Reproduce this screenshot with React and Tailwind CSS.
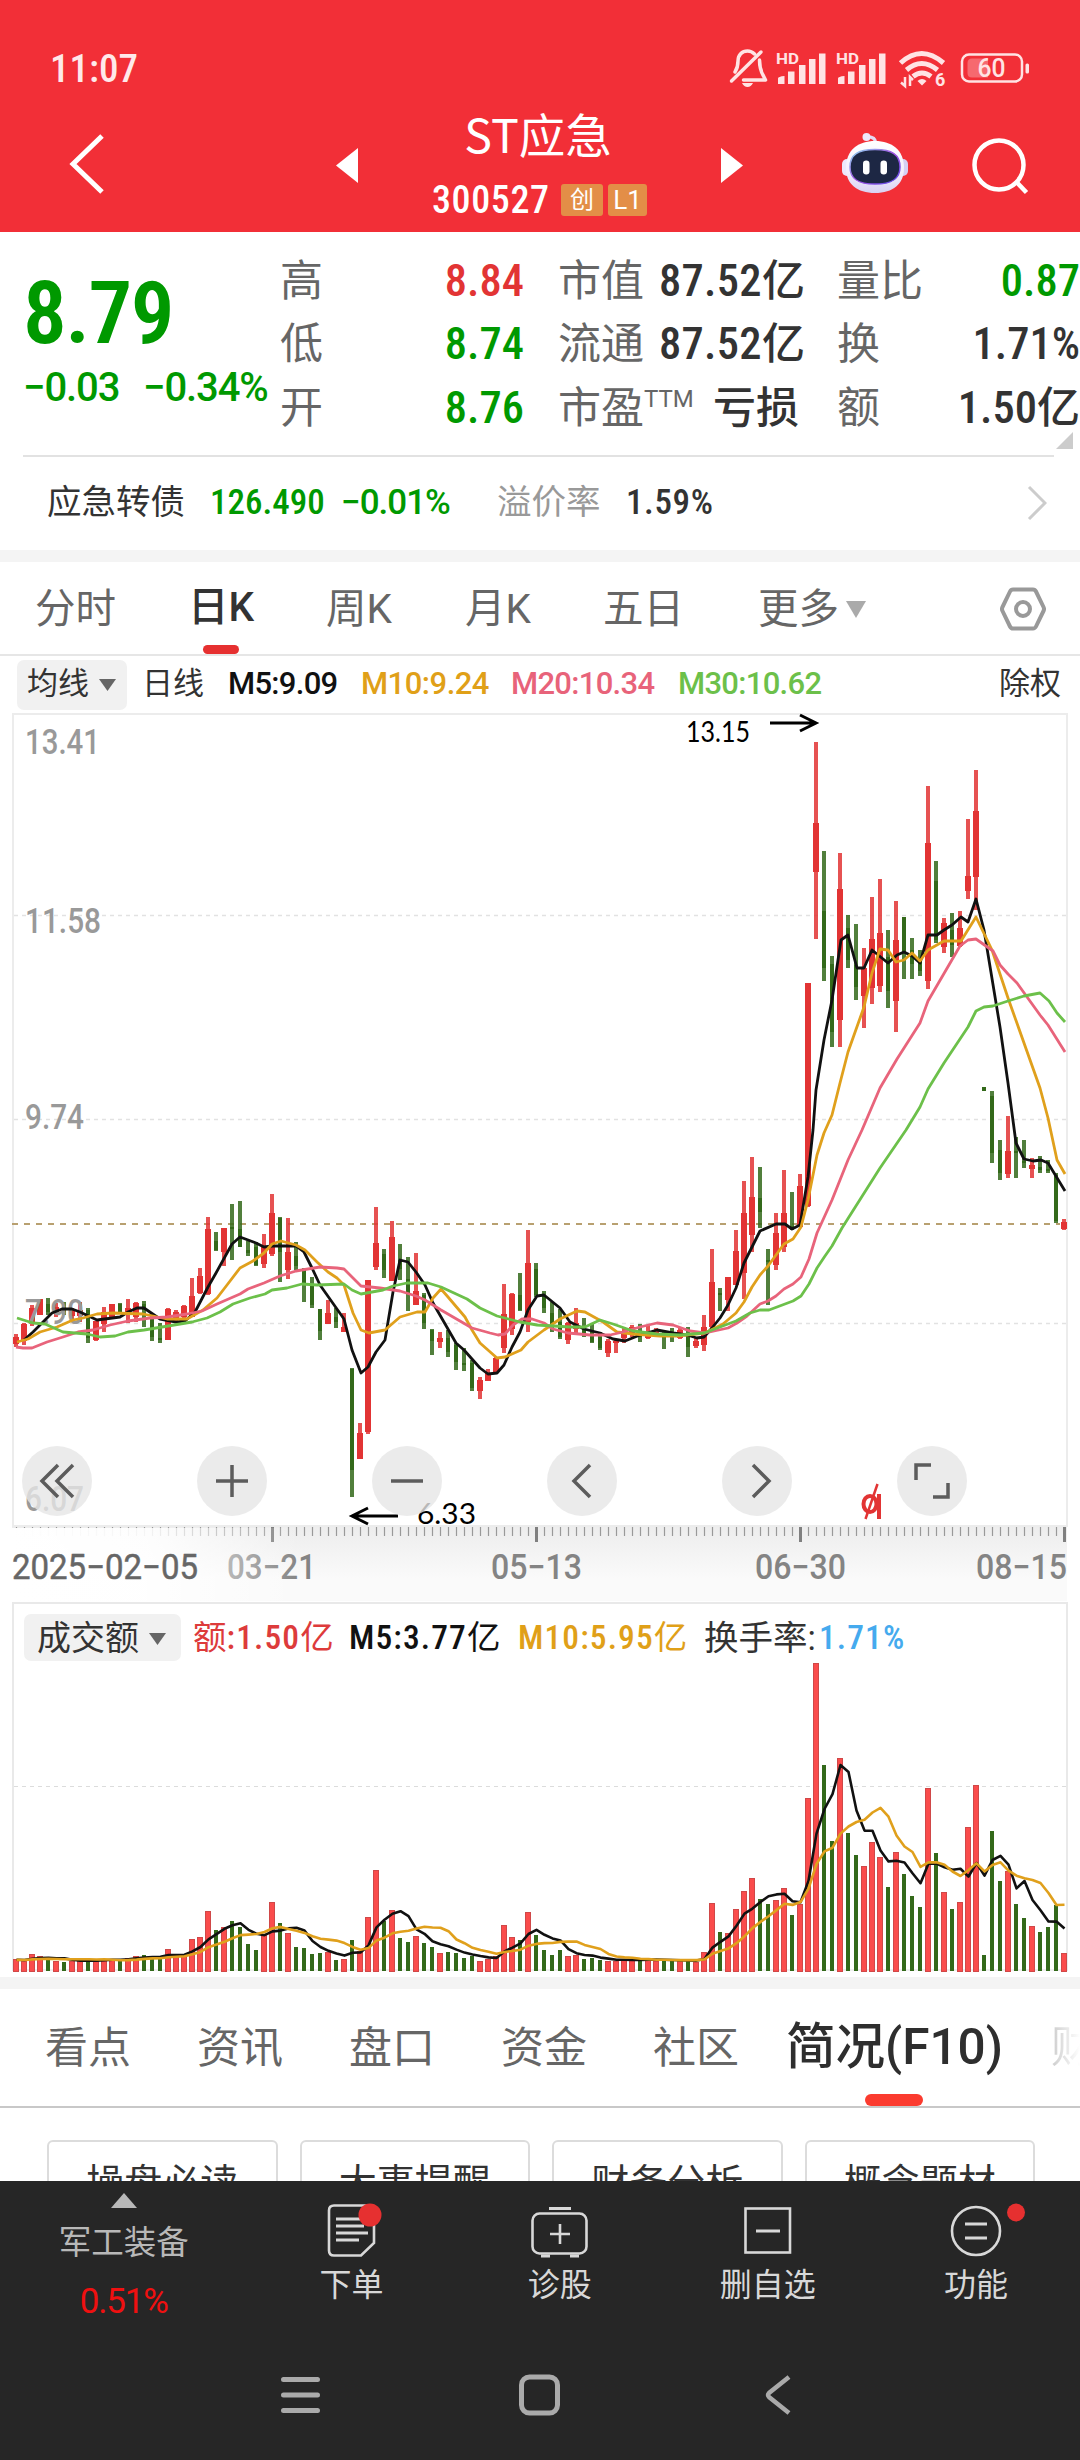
const RED = "#e23434";
const GREEN = "#33691a";

// [up, high, bodyTop, bodyBottom, low, turnover] in chart units, one row per trading day
const DAYS = [
  [1, 1334, 1337, 1344, 1347, 12], [1, 1323, 1324, 1341, 1345, 10], [1, 1305, 1308, 1324, 1326, 17],
  [1, 1299, 1299, 1315, 1315, 15], [0, 1298, 1304, 1312, 1315, 12], [1, 1303, 1307, 1313, 1317, 10],
  [0, 1302, 1307, 1312, 1315, 9], [1, 1308, 1310, 1316, 1319, 10], [1, 1302, 1310, 1316, 1322, 11],
  [0, 1308, 1310, 1338, 1343, 11], [1, 1321, 1321, 1340, 1341, 10], [1, 1307, 1312, 1324, 1332, 12],
  [1, 1304, 1304, 1319, 1319, 12], [0, 1303, 1304, 1312, 1313, 11], [1, 1299, 1308, 1313, 1323, 13],
  [1, 1302, 1303, 1317, 1322, 15], [0, 1301, 1304, 1310, 1327, 16], [0, 1313, 1317, 1337, 1341, 15],
  [0, 1323, 1338, 1339, 1343, 12], [1, 1308, 1309, 1340, 1340, 22], [1, 1310, 1312, 1320, 1322, 15],
  [1, 1305, 1306, 1317, 1322, 17], [1, 1278, 1296, 1317, 1317, 32], [1, 1268, 1276, 1293, 1294, 34],
  [1, 1217, 1229, 1294, 1295, 60], [0, 1232, 1241, 1250, 1251, 41], [1, 1228, 1228, 1252, 1266, 44],
  [0, 1204, 1227, 1229, 1260, 50], [0, 1201, 1229, 1247, 1247, 44], [0, 1241, 1250, 1253, 1256, 27],
  [0, 1242, 1247, 1265, 1266, 21], [1, 1234, 1247, 1264, 1268, 37], [1, 1194, 1213, 1254, 1256, 69],
  [0, 1217, 1218, 1252, 1282, 48], [1, 1218, 1252, 1270, 1279, 38], [0, 1242, 1256, 1266, 1270, 24],
  [0, 1268, 1269, 1283, 1302, 23], [0, 1277, 1284, 1305, 1308, 17], [0, 1309, 1309, 1331, 1340, 18],
  [1, 1300, 1313, 1324, 1324, 19], [0, 1308, 1317, 1322, 1328, 11], [1, 1313, 1327, 1332, 1332, 12],
  [0, 1368, 1369, 1470, 1497, 31], [1, 1423, 1433, 1459, 1459, 20], [1, 1280, 1280, 1432, 1434, 54],
  [1, 1207, 1243, 1267, 1270, 101], [0, 1249, 1254, 1270, 1278, 50], [1, 1221, 1237, 1281, 1281, 61],
  [0, 1244, 1260, 1269, 1280, 33], [0, 1257, 1279, 1293, 1311, 29], [1, 1253, 1291, 1305, 1305, 35],
  [0, 1293, 1295, 1323, 1329, 28], [0, 1329, 1330, 1341, 1355, 24], [1, 1332, 1338, 1342, 1348, 18],
  [0, 1330, 1338, 1352, 1357, 19], [0, 1343, 1345, 1362, 1370, 18], [0, 1348, 1363, 1365, 1371, 13],
  [0, 1360, 1363, 1388, 1391, 15], [1, 1377, 1380, 1391, 1399, 10], [1, 1369, 1373, 1381, 1381, 12],
  [1, 1357, 1358, 1372, 1374, 15], [1, 1284, 1314, 1348, 1353, 46], [1, 1293, 1294, 1329, 1335, 34],
  [0, 1273, 1295, 1310, 1311, 31], [1, 1230, 1263, 1322, 1332, 59], [0, 1263, 1269, 1295, 1297, 36],
  [0, 1291, 1295, 1308, 1313, 21], [0, 1302, 1313, 1327, 1332, 16], [0, 1309, 1322, 1337, 1339, 21],
  [1, 1322, 1323, 1340, 1344, 15], [1, 1308, 1323, 1329, 1333, 16], [0, 1318, 1327, 1333, 1337, 12],
  [0, 1323, 1332, 1342, 1343, 13], [0, 1332, 1337, 1348, 1350, 11], [1, 1339, 1341, 1353, 1357, 10],
  [1, 1340, 1341, 1343, 1353, 10], [1, 1327, 1332, 1338, 1343, 12], [1, 1325, 1327, 1333, 1337, 12],
  [0, 1324, 1332, 1337, 1342, 11], [1, 1326, 1332, 1338, 1339, 12], [1, 1328, 1331, 1336, 1337, 10],
  [0, 1332, 1333, 1338, 1349, 11], [0, 1328, 1332, 1335, 1342, 11], [1, 1328, 1330, 1338, 1339, 10],
  [0, 1327, 1337, 1347, 1357, 11], [1, 1338, 1341, 1346, 1348, 9], [1, 1315, 1327, 1345, 1351, 19],
  [1, 1249, 1282, 1327, 1329, 68], [0, 1288, 1293, 1295, 1311, 39], [1, 1277, 1277, 1300, 1311, 38],
  [1, 1230, 1251, 1285, 1285, 62], [1, 1181, 1213, 1273, 1299, 80], [1, 1157, 1197, 1235, 1252, 93],
  [0, 1167, 1198, 1212, 1228, 72], [0, 1249, 1260, 1262, 1305, 67], [1, 1213, 1233, 1265, 1270, 71],
  [1, 1170, 1213, 1247, 1252, 83], [0, 1192, 1226, 1229, 1230, 56], [1, 1174, 1186, 1227, 1227, 67],
  [1, 983, 983, 1206, 1207, 173], [1, 742, 823, 872, 939, 308], [0, 851, 911, 968, 981, 206],
  [0, 956, 964, 1032, 1047, 130], [1, 853, 889, 1020, 1047, 213], [0, 915, 928, 960, 968, 138],
  [0, 924, 965, 987, 1000, 116], [1, 948, 968, 996, 1028, 105], [1, 897, 939, 988, 1004, 129],
  [1, 879, 933, 986, 992, 114], [0, 930, 957, 991, 1008, 84], [1, 901, 940, 1001, 1032, 119],
  [0, 917, 917, 953, 979, 97], [0, 938, 950, 964, 979, 75], [0, 950, 958, 971, 976, 64],
  [1, 786, 843, 981, 989, 183], [0, 861, 881, 940, 943, 118], [1, 918, 923, 947, 953, 79],
  [0, 913, 930, 945, 957, 62], [1, 911, 928, 946, 947, 69], [1, 819, 876, 891, 899, 144],
  [1, 770, 811, 877, 910, 186], [0, 1087, 1087, 1091, 1091, 16], [0, 1091, 1096, 1153, 1163, 140],
  [0, 1140, 1150, 1173, 1180, 90], [1, 1116, 1151, 1174, 1178, 100], [0, 1137, 1151, 1153, 1178, 67],
  [0, 1140, 1161, 1163, 1168, 53], [1, 1158, 1165, 1169, 1178, 45], [0, 1156, 1167, 1170, 1173, 39],
  [0, 1160, 1169, 1171, 1173, 44], [0, 1173, 1175, 1221, 1223, 66], [1, 1219, 1222, 1229, 1230, 18],
];

const MA5 =
  "24,1340 33,1332 43,1322 52,1313 62,1309 72,1309 80,1312 97,1320 120,1317 128,1312 137,1308 144,1308 160,1319 176,1322 185,1321 195,1312 208,1287 216,1273 232,1244 240,1237 256,1243 264,1247 272,1246 296,1246 304,1252 312,1268 320,1285 344,1319 352,1350 361,1373 368,1367 376,1352 385,1340 393,1292 400,1260 408,1262 416,1272 425,1285 433,1303 456,1343 464,1350 480,1368 488,1374 497,1373 504,1365 512,1347 520,1332 528,1310 537,1296 544,1295 560,1308 570,1322 584,1329 600,1333 613,1339 625,1341 640,1335 657,1330 673,1333 687,1335 697,1338 704,1337 712,1328 720,1318 728,1305 736,1288 744,1263 760,1231 776,1224 785,1224 792,1229 800,1225 808,1177 813,1130 816,1090 824,1040 832,1000 841,940 848,935 857,968 864,968 872,950 888,963 897,955 904,952 912,956 920,963 928,935 937,935 944,930 952,925 961,917 968,922 976,899 984,930 1000,1027 1008,1083 1016,1143 1024,1159 1033,1161 1041,1160 1048,1163 1065,1191";
const MA10 =
  "17,1342 28,1339 40,1332 57,1327 73,1320 83,1318 97,1314 113,1313 143,1314 153,1316 167,1319 187,1319 203,1310 217,1298 227,1285 240,1268 253,1261 264,1253 272,1244 281,1241 296,1245 305,1250 317,1262 328,1272 337,1278 344,1285 353,1313 361,1330 369,1333 385,1330 400,1317 417,1312 425,1312 433,1298 441,1289 448,1297 465,1317 472,1330 480,1343 497,1358 505,1357 521,1350 528,1342 544,1330 560,1319 577,1311 585,1312 603,1322 617,1332 633,1334 660,1336 677,1336 705,1333 723,1324 736,1313 744,1302 752,1287 760,1275 768,1266 784,1244 793,1239 801,1227 808,1200 817,1155 824,1133 832,1115 840,1083 848,1052 864,1007 872,973 880,949 888,950 896,962 904,960 912,953 920,961 928,950 944,941 961,941 976,917 992,950 1008,998 1040,1088 1048,1118 1057,1160 1065,1174";
const MA20 =
  "16,1347 23,1348 32,1348 47,1342 63,1337 78,1332 93,1330 110,1325 128,1321 150,1318 167,1317 187,1314 202,1311 217,1304 240,1294 248,1289 264,1283 280,1276 296,1271 320,1267 337,1268 344,1269 361,1286 380,1288 400,1291 416,1296 425,1300 441,1310 472,1328 490,1333 498,1335 505,1334 513,1325 522,1319 532,1319 544,1323 553,1329 568,1333 590,1335 610,1335 623,1332 640,1327 657,1323 673,1325 690,1331 705,1333 728,1328 737,1323 747,1316 760,1304 768,1301 776,1296 784,1289 793,1284 801,1277 809,1259 817,1233 832,1200 848,1160 862,1130 880,1088 897,1059 920,1023 928,1001 960,946 968,940 976,939 993,951 1000,965 1008,974 1017,983 1040,1015 1048,1025 1065,1052";
const MA30 =
  "17,1318 33,1323 45,1324 63,1332 87,1334 100,1337 115,1336 128,1332 144,1330 168,1326 192,1322 207,1318 220,1312 233,1304 250,1298 265,1294 272,1290 287,1288 302,1284 317,1285 344,1284 352,1290 361,1294 383,1290 393,1286 407,1283 428,1283 441,1287 467,1299 480,1308 497,1316 520,1322 537,1325 570,1327 585,1327 600,1320 613,1324 633,1331 657,1334 680,1335 704,1333 736,1321 750,1313 760,1310 769,1310 793,1301 801,1296 809,1284 817,1268 825,1256 832,1246 842,1228 880,1168 906,1130 920,1107 928,1089 944,1063 968,1027 976,1011 984,1007 993,1006 1008,1001 1024,996 1040,993 1049,1001 1057,1013 1065,1022";

const dayX = (i) => 16 + i * 8;

function volumeAverage(n) {
  return DAYS.map((_, i) => {
    let sum = 0;
    for (let k = i - n + 1; k <= i; k++) sum += k < 0 ? 11 : DAYS[k][5];
    return `${dayX(i) + 0.5},${(1971 - sum / n).toFixed(1)}`;
  }).join(" ");
}

function Caret({ className }) {
  return (
    <svg className={className} viewBox="0 0 18 12" fill="currentColor" preserveAspectRatio="none">
      <path d="M0 0h18L9 12z" />
    </svg>
  );
}

function Signal({ x }) {
  return (
    <g transform={`translate(${x} 0)`} fill="#ffe3e4">
      <text x="-2" y="16" fontSize="15.5" fontWeight="700" textLength="23" lengthAdjust="spacingAndGlyphs">
        HD
      </text>
      <path d="M0 36v-5.500q0-2 6.500-2.500v8zM10 23.500h6.500V36H10zM21 17h6.500v19H21zM31 11h6.500v25H31zM41 5.500h6.500V36H41z" />
    </g>
  );
}

function StatusBar() {
  return (
    <div className="flex h-[88px] items-end justify-between pl-[50px]">
      <span className="mb-[-4px] text-[39px] leading-[46px] font-medium text-[#ffe9ea] [font-stretch:75%]">11:07</span>
      <svg className="h-[44px] w-[350px] overflow-visible" viewBox="0 -4 350 44">
        <g fill="none" stroke="#ffe3e4" strokeWidth="3.500" strokeLinecap="round" strokeLinejoin="round">
          <path d="M6 24c2-3 3-6 3-11C9 7 13 3 18.500 3c3 0 5 1 7 3M30.500 12c0 8 1 11 4 16l2 4H14.500" transform="translate(-1 0)" />
          <path d="M1.500 33L31 4" />
        </g>
        <path d="M12 35h11q-2 4-5.500 4T12 35z" fill="#ffe3e4" />
        <Signal x={48} />
        <Signal x={108} />
        <g fill="none" stroke="#ffe3e4" strokeWidth="5">
          <path d="M170.500 15q21-19 43 0M176.500 22q15-13 31 0M183 28.500q9-7 18 0" />
        </g>
        <path d="M187.500 33q4.500-4 9 0l-4.500 4.500z" fill="#ffe3e4" />
        <path d="M175 29v9l-4-3.500M180 38v-9l3 3" fill="none" stroke="#ffe3e4" strokeWidth="2.500" />
        <text x="205" y="38" fontSize="18" fontWeight="700" fill="#ffe3e4">6</text>
        <rect x="232" y="6.500" width="60" height="27" rx="7" fill="none" stroke="#ffe3e4" strokeWidth="2.500" />
        <path d="M242 10.500h16v19h-16q-4.500 0-4.500-4.500V15q0-4.500 4.500-4.500z" fill="#f6696f" />
        <text x="247.500" y="29" fontSize="25" fontWeight="500" fill="#ffe3e4" textLength="28" lengthAdjust="spacingAndGlyphs">
          60
        </text>
        <rect x="295.500" y="15.500" width="3.500" height="10" rx="1.500" fill="#ffe3e4" />
      </svg>
    </div>
  );
}

function Robot() {
  return (
    <svg className="h-[62px] w-[68px]" viewBox="0 0 68 62">
      <defs>
        <linearGradient id="shell" x1="0" y1="0" x2="0" y2="1">
          <stop offset="0" stopColor="#ffffff" />
          <stop offset="0.600" stopColor="#f3eefc" />
          <stop offset="1" stopColor="#d9d2f2" />
        </linearGradient>
        <linearGradient id="rim" x1="0" y1="0" x2="1" y2="1">
          <stop offset="0" stopColor="#8fdcf0" />
          <stop offset="0.500" stopColor="#a04fe0" />
          <stop offset="1" stopColor="#5b4be8" />
        </linearGradient>
      </defs>
      <path d="M25 5q9-1 10 6" fill="none" stroke="#e4d9f3" strokeWidth="3" />
      <circle cx="25.500" cy="5" r="4" fill="#eee8fb" />
      <rect x="1" y="27" width="10" height="17" rx="5" fill="#ece8fb" />
      <rect x="57" y="27" width="10" height="17" rx="5" fill="#d6d0f4" />
      <path d="M34 9c17 0 29 9 29 27 0 16-11 25-29 25S5 52 5 36C5 18 17 9 34 9z" fill="url(#shell)" />
      <path d="M34 17.500c17 0 25 5 25 17.500 0 12-8 17-25 17S9 47 9 35c0-12.500 8-17.500 25-17.500z" fill="#1d2744" stroke="url(#rim)" strokeWidth="1.500" />
      <rect x="22" y="28.500" width="6.500" height="14" rx="3.200" fill="#fff" />
      <rect x="39.500" y="28.500" width="6.500" height="14" rx="3.200" fill="#fff" />
    </svg>
  );
}

function Header() {
  return (
    <header className="h-[232px] bg-[#f22f37] text-white">
      <StatusBar />
      <div className="flex h-[144px]">
        <svg className="mt-[44px] ml-[66px] h-[64px] w-[42px]" viewBox="0 0 42 64">
          <path d="M36 4L7 32l29 28" fill="none" stroke="#fff" strokeWidth="5" />
        </svg>
        <svg className="mt-[60px] ml-[228px] h-[35px] w-[22px]" viewBox="0 0 22 35" fill="#fff">
          <path d="M22 0v35L0 17.500z" />
        </svg>
        <div className="flex w-[363px] flex-col items-center">
          <h1 className="mt-[17px] mr-[3px] text-[46.500px] leading-[56px] font-normal font-['Noto_Sans_CJK_SC',sans-serif]">ST应急</h1>
          <div className="mt-[20px] flex h-[38px] items-center">
            <span className="w-[129px] text-[38px] leading-[38px] font-medium tracking-[0.6px] [font-stretch:75%]">300527</span>
            <span className="mr-[5px] flex h-[32px] w-[42px] items-center justify-center rounded-[3px] bg-[#e38e47] text-[24px] leading-none">
              创
            </span>
            <span className="flex h-[32px] w-[39px] items-center justify-center rounded-[3px] bg-[#e38e47] text-[26px] leading-none">
              L1
            </span>
          </div>
        </div>
        <svg className="mt-[60px] h-[35px] w-[22px]" viewBox="0 0 22 35" fill="#fff">
          <path d="M0 0v35l22-17.500z" />
        </svg>
        <div className="mt-[44px] ml-[98px]">
          <Robot />
        </div>
        <svg className="mt-[48px] ml-[60px] h-[60px] w-[60px]" viewBox="0 0 60 60" fill="none" stroke="#fff" strokeWidth="4.500">
          <circle cx="30" cy="29" r="24.500" />
          <path d="M47.500 46l10 10.500" />
        </svg>
      </div>
    </header>
  );
}

const STATS = [
  { label: "高", value: "8.84", color: "text-[#e23434]", cap: "市值", capValue: "87.52", unit: "亿", r: "量比", rValue: "0.87", rUnit: "", rColor: "text-[#009900]" },
  { label: "低", value: "8.74", color: "text-[#009900]", cap: "流通", capValue: "87.52", unit: "亿", r: "换", rValue: "1.71%", rUnit: "", rColor: "text-[#333]" },
  { label: "开", value: "8.76", color: "text-[#009900]", cap: "市盈", ttm: true, capValue: "", unit: "亏损", r: "额", rValue: "1.50", rUnit: "亿", rColor: "text-[#333]" },
];

function Quote() {
  return (
    <section className="h-[318px]">
      <div className="flex h-[223px]">
        <div className="w-[281px] pl-[23px] text-[#009900]">
          <div className="mt-[31px] text-[87px] leading-[100px] font-semibold tracking-[-1.5px] [font-stretch:75%]">8.79</div>
          <div className="mt-[1px] flex text-[40px] leading-[48px] font-medium tracking-[-1.1px] whitespace-nowrap">
            <span className="w-[120px]">−0.03</span>
            <span>−0.34%</span>
          </div>
        </div>
        <div className="flex flex-1 flex-col pt-[17px]">
          {STATS.map((s) => (
            <div key={s.label} className="flex h-[63.500px] items-center text-[43px] leading-[60px] whitespace-nowrap text-[#666]">
              <span className="-ml-px w-[121px]">{s.label}</span>
              <span className={`w-[123px] text-right text-[44.500px] font-medium [font-stretch:75%] ${s.color}`}>{s.value}</span>
              <span className="ml-[34px] w-[131px]">
                {s.cap}
                {s.ttm && <sup className="top-[-16px] align-baseline text-[24px] leading-none">TTM</sup>}
              </span>
              <span className="-ml-[30px] w-[140px] text-right font-medium text-[#333]">
                <span className="text-[44.500px] tracking-[0.3px] [font-stretch:75%]">{s.capValue}</span>
                {s.unit}
              </span>
              <span className="ml-[38px] w-[84px]">{s.r}</span>
              <span className={`flex-1 text-right font-medium ${s.rColor}`}>
                <span className="text-[44.500px] [font-stretch:75%]">{s.rValue}</span>
                {s.rUnit}
              </span>
            </div>
          ))}
          <svg className="mt-[-8px] mr-[7px] h-[17px] w-[17px] shrink-0 self-end" viewBox="0 0 17 17">
            <path d="M17 0v17H0z" fill="#ccc" />
          </svg>
        </div>
      </div>
      <div className="mr-[26px] ml-[23px] h-[2px] bg-[#e2e2e2]" />
      <div className="flex h-[92px] items-center pl-[47px] text-[34.500px] font-medium whitespace-nowrap">
        <span className="w-[163px] font-normal text-[#333]">应急转债</span>
        <span className="w-[131px] text-[35px] text-[#009900] [font-stretch:75%]">126.490</span>
        <span className="w-[156px] text-[35px] tracking-[-1px] text-[#009900]">−0.01%</span>
        <span className="w-[129px] font-normal text-[#999]">溢价率</span>
        <span className="w-[401px] text-[35px] tracking-[0.6px] text-[#333] [font-stretch:75%]">1.59%</span>
        <svg className="h-[36px] w-[20px]" viewBox="0 0 20 36">
          <path d="M2 2l16 16L2 34" fill="none" stroke="#ccc" strokeWidth="3" />
        </svg>
      </div>
    </section>
  );
}

function PeriodTabs() {
  return (
    <nav className="flex h-[94px] items-center border-b-2 border-[#e6e6e6] pl-[35px] text-[40.500px] whitespace-nowrap text-[#666]">
      <span className="mt-[3px] w-[153px]">分时</span>
      <span className="flex h-[92px] w-[138px] flex-col text-[#333]">
        <span className="h-[83px] leading-[91px] font-medium">日K</span>
        <span className="ml-[15px] h-[9px] w-[36px] shrink-0 rounded-[5px] bg-[#e63030]" />
      </span>
      <span className="mt-[3px] w-[139px]">周K</span>
      <span className="mt-[3px] w-[138px]">月K</span>
      <span className="mt-[3px] w-[155px]">五日</span>
      <span className="mt-[3px]">更多</span>
      <Caret className="mt-[2px] ml-[7px] h-[17px] w-[20px] text-[#aaa]" />
      <svg className="mt-[2px] ml-[134px] h-[44px] w-[46px]" viewBox="0 0 46 44" fill="none" stroke="#999" strokeWidth="4">
        <path d="M13 2.500h20q2 0 3 2L43.500 20q1 2 0 4L36 39.500q-1 2-3 2H13q-2 0-3-2L2.500 24q-1-2 0-4L10 4.500q1-2 3-2z" />
        <circle cx="23" cy="22" r="7" />
      </svg>
    </nav>
  );
}

function Legend() {
  return (
    <div className="flex h-[57px] items-center pl-[17px] text-[31px] whitespace-nowrap text-[#333]">
      <span className="flex h-[50px] w-[110px] items-center rounded-[7px] bg-[#f1f1f1] pl-[10px]">
        均线
        <Caret className="ml-[10px] h-[12px] w-[17px] text-[#666]" />
      </span>
      <span className="ml-[15px] w-[86px]">日线</span>
      <span className="w-[133px] font-medium tracking-[-0.7px] text-[#111]">M5:9.09</span>
      <span className="w-[150px] font-medium tracking-[-0.5px] text-[#e0a018]">M10:9.24</span>
      <span className="w-[167px] font-medium tracking-[-0.7px] text-[#e8637a]">M20:10.34</span>
      <span className="w-[321px] font-medium tracking-[-0.7px] text-[#6cc04a]">M30:10.62</span>
      <span>除权</span>
    </div>
  );
}

const PRICE_LABELS = [
  ["13.41", 754, 75],
  ["11.58", 933, 76],
  ["9.74", 1129, 59],
  ["7.90", 1324, 59],
  ["6.07", 1511, 59],
];

const DATES = [
  ["03−21", 227, 89],
  ["05−13", 491, 91],
  ["06−30", 755, 91],
  ["08−15", 976, 91],
];

function Candle({ day, x }) {
  const [up, high, top, bottom, low] = day;
  return (
    <g fill={up ? RED : GREEN}>
      <rect x={x - 2} y={high} width="4" height={low - high} opacity="0.850" />
      <rect x={x - (up ? 3 : 2)} y={top} width={up ? 6 : 4} height={Math.max(bottom - top, 2)} />
    </g>
  );
}

function PriceChart() {
  return (
    <svg className="block h-[888px] w-[1080px]" viewBox="0 713 1080 888">
      <defs>
        <linearGradient id="axis" x1="0" y1="0" x2="0" y2="1">
          <stop offset="0" stopColor="#ededed" />
          <stop offset="0.700" stopColor="#fafafa" />
        </linearGradient>
        <linearGradient id="fade" x1="0" y1="0" x2="1" y2="0">
          <stop offset="0" stopColor="#fff" />
          <stop offset="0.150" stopColor="#fff" stopOpacity="0.900" />
          <stop offset="0.320" stopColor="#fff" stopOpacity="0" />
        </linearGradient>
      </defs>
      <rect x="13" y="714" width="1054" height="812" fill="none" stroke="#ececec" strokeWidth="2" />
      <g stroke="#e2e2e2" strokeWidth="1.500" strokeDasharray="4 4">
        <path d="M14 915.500H1066M14 1119.500H1066M14 1323.500H1066" />
      </g>
      <path d="M12 1224H1060" stroke="#b8a070" strokeWidth="2" strokeDasharray="6 6" />
      {DAYS.map((day, i) => (
        <Candle key={i} day={day} x={dayX(i)} />
      ))}
      <g fontSize="34.500" fontWeight="500" fill="#999">
        {PRICE_LABELS.map(([t, y, w]) => (
          <text key={t} x="25" y={y} textLength={w} lengthAdjust="spacingAndGlyphs">
            {t}
          </text>
        ))}
      </g>
      <g fill="none" strokeWidth="2.800" strokeLinejoin="round">
        <polyline points={MA5} stroke="#111" />
        <polyline points={MA10} stroke="#e0a01c" />
        <polyline points={MA20} stroke="#e8647b" />
        <polyline points={MA30} stroke="#6cc04a" />
      </g>
      <g fill="none" stroke="#000" strokeWidth="3">
        <path d="M770 723H815M800 715l16 8-16 8M398 1516H353M368 1508l-16 8 16 8" />
      </g>
      <g fontSize="29.500" fill="#000" fontFamily="Lato, sans-serif">
        <text x="686" y="742" textLength="64" lengthAdjust="spacingAndGlyphs">13.15</text>
        <text x="417" y="1524" textLength="59" lengthAdjust="spacingAndGlyphs">6.33</text>
      </g>
      <g fill="none" stroke={RED}>
        <ellipse cx="870" cy="1504" rx="6.500" ry="8" strokeWidth="4" />
        <path d="M879 1494v25" strokeWidth="4" />
        <path d="M865.500 1519L877.500 1484" strokeWidth="2.500" />
      </g>
      <rect x="12" y="1527" width="1055" height="74" fill="url(#axis)" />
      {DAYS.map((_, i) => (
        <path
          key={i}
          d={i % 33 === 32 ? `M${dayX(i) + 0.5} 1527v15` : `M${dayX(i) + 0.5} 1527v9`}
          stroke={i % 33 === 32 ? "#808080" : "#999"}
          strokeWidth={i % 33 === 32 ? 3 : 1.2}
        />
      ))}
      <g fontSize="35" fontWeight="500" fill="#848484">
        {DATES.map(([t, x, w]) => (
          <text key={t} x={x} y="1579" textLength={w} lengthAdjust="spacingAndGlyphs">
            {t}
          </text>
        ))}
      </g>
      <rect x="12" y="1528" width="900" height="73" fill="url(#fade)" />
      <text x="12" y="1579" fontSize="35" stroke="#666" strokeWidth="0.500" fill="#666" textLength="186" lengthAdjust="spacingAndGlyphs">
        2025−02−05
      </text>
    </svg>
  );
}

const CONTROLS = [
  "M18 1L2 17l16 16M33 1L17 17l16 16",
  "M17 1v32M1 17h32",
  "M1 17h32",
  "M25 1L9 17l16 16",
  "M13 1l16 16-16 16",
];

function ChartControls() {
  return (
    <div className="absolute top-[733px] left-[22px] flex gap-[105px]">
      {CONTROLS.map((d) => (
        <button key={d} className="flex h-[70px] w-[70px] items-center justify-center rounded-full bg-[#e6e6e6]/80">
          <svg className="h-[34px] w-[34px] overflow-visible" viewBox="0 0 34 34" fill="none" stroke="#5c5c5c" strokeWidth="3.500">
            <path d={d} />
          </svg>
        </button>
      ))}
      <button className="flex h-[70px] w-[70px] items-center justify-center rounded-full bg-[#e6e6e6]/80">
        <svg className="h-[36px] w-[36px]" viewBox="0 0 36 36" fill="none" stroke="#5c5c5c" strokeWidth="3.500">
          <path d="M2 17V2h15M34 20v14H19" />
        </svg>
      </button>
    </div>
  );
}

function VolumeLegend() {
  return (
    <div className="absolute top-[13px] left-[24px] flex h-[47px] items-center text-[33.500px] whitespace-nowrap text-[#333]">
      <span className="flex h-[47px] w-[157px] items-center rounded-[7px] bg-[#f1f1f1] pt-[2px] pl-[13px] text-[34px]">
        成交额
        <Caret className="ml-[10px] h-[12px] w-[17px] text-[#666]" />
      </span>
      <span className="mt-[2px] ml-[12px] w-[156px] text-[#dd3b3b]">
        额<span className="font-medium tracking-[1.1px] [font-stretch:75%]">:1.50</span>亿
      </span>
      <span className="mt-[2px] w-[169px] text-[#111]">
        <span className="font-medium tracking-[1.1px] [font-stretch:75%]">M5:3.77</span>亿
      </span>
      <span className="mt-[2px] w-[186px] text-[#e0a018]">
        <span className="font-medium tracking-[1.1px] [font-stretch:75%]">M10:5.95</span>亿
      </span>
      <span className="mt-[2px] w-[115px] text-[34.500px]">换手率:</span>
      <span className="mt-[2px] font-medium tracking-[1.1px] text-[#45aaee] [font-stretch:75%]">1.71%</span>
    </div>
  );
}

function VolumeChart() {
  return (
    <svg className="block h-[376px] w-[1080px]" viewBox="0 1601 1080 376">
      <path d="M13 1971V1603H1067V1971" fill="none" stroke="#e9e9e9" strokeWidth="2" />
      <path d="M13 1970H1067" stroke="#f0f0f0" strokeWidth="2" />
      <path d="M14 1786.500H1066" stroke="#dcdcdc" strokeWidth="1.200" strokeDasharray="4 4" />
      {DAYS.map(([up, , , , , v], i) =>
        up ? (
          <rect key={i} x={dayX(i) - 2.5} y={1971.5 - v} width="5" height={v} fill="#fa4c4c" stroke="#d04848" strokeWidth="1" />
        ) : (
          <rect key={i} x={dayX(i) - 2} y={1971 - v} width="4" height={v} fill={GREEN} />
        )
      )}
      <g fill="none" strokeWidth="2.600" strokeLinejoin="round">
        <polyline points={volumeAverage(5)} stroke="#111" />
        <polyline points={volumeAverage(10)} stroke="#e0a01c" />
      </g>
    </svg>
  );
}

function InfoTabs() {
  return (
    <nav className="flex h-[119px] items-center overflow-hidden border-b-2 border-[#c8c8c8] pl-[45px] text-[43px] whitespace-nowrap text-[#666]">
      <span className="mt-[2px] w-[152px] shrink-0">看点</span>
      <span className="mt-[2px] w-[152px] shrink-0">资讯</span>
      <span className="mt-[2px] w-[152px] shrink-0">盘口</span>
      <span className="mt-[2px] w-[152px] shrink-0">资金</span>
      <span className="mt-[2px] w-[133px] shrink-0">社区</span>
      <span className="flex h-[117px] w-[265px] shrink-0 flex-col text-[#2e2e2e]">
        <span className="h-[105px] text-[49.500px] leading-[117px] font-medium">简况(F10)</span>
        <span className="ml-[79px] h-[12px] w-[58px] shrink-0 rounded-[6px] bg-[#fb3b2f]" />
      </span>
      <span className="bg-gradient-to-r from-[#ccc] to-white bg-[length:29px] bg-clip-text text-transparent">财</span>
    </nav>
  );
}

function Shortcuts() {
  return (
    <div className="flex h-[73px] gap-[22px] overflow-hidden pt-[32px] pl-[47px]">
      {["操盘必读", "大事提醒", "财务分析", "概念题材"].map((t) => (
        <div key={t} className="h-[88px] w-[230.500px] shrink-0 rounded-[6px] border-2 border-[#dcdcdc] text-center text-[38px] leading-[82px] text-[#333]">
          {t}
        </div>
      ))}
    </div>
  );
}

function BottomItem({ label, children }) {
  return (
    <div className="flex w-[208.500px] flex-col items-center pt-[20px] text-[#d8d8d8]">
      <svg className="h-[60px] w-[100px] overflow-visible" viewBox="0 0 100 60" fill="none" stroke="currentColor" strokeWidth="2.600">
        {children}
      </svg>
      <span className="mt-[2px] text-[32px] leading-[44px]">{label}</span>
    </div>
  );
}

function BottomBar() {
  return (
    <footer className="h-[279px] bg-[#262626]">
      <div className="flex h-[150px]">
        <div className="flex w-[248px] flex-col items-center text-[#b8b8b8]">
          <Caret className="mt-[12px] h-[15px] w-[26px] rotate-180" />
          <span className="mt-[13px] text-[32.500px] leading-[44px]">军工装备</span>
          <span className="mt-[15px] text-[35px] leading-[44px] font-normal tracking-[-1.2px] text-[#f01010]">0.51%</span>
        </div>
        <BottomItem label="下单">
          <path d="M32 4.500h34q6 0 6 6V42L59 54.500H32q-5 0-5-5V9.500q0-5 5-5z" />
          <path d="M34 18h24M34 25h28M34 32h32M34 39h23" strokeWidth="3" />
          <circle cx="68" cy="14" r="11.500" fill="#e63030" stroke="none" />
        </BottomItem>
        <BottomItem label="诊股">
          <rect x="22.500" y="12.500" width="54" height="40" rx="7" />
          <path d="M39 7.500h22M31 55h9M60 55h9" strokeWidth="3" />
          <path d="M50 23v20M40 33h20" />
        </BottomItem>
        <BottomItem label="删自选">
          <rect x="27.500" y="7.500" width="44.500" height="44" />
          <path d="M38 30h24" strokeWidth="3" />
        </BottomItem>
        <BottomItem label="功能">
          <circle cx="50" cy="30" r="24" />
          <path d="M39 23h22M39 37h22" strokeWidth="3" />
          <circle cx="90" cy="11.500" r="9" fill="#e63030" stroke="none" />
        </BottomItem>
      </div>
      <div className="flex h-[129px] items-start pt-[42px]">
        <svg className="ml-[281px] h-[44px] w-[39px]" viewBox="0 0 39 44" stroke="#aaa" strokeWidth="5" strokeLinecap="round">
          <path d="M2.500 6.500h34M2.500 22h34M2.500 37.500h34" />
        </svg>
        <svg className="ml-[199px] h-[44px] w-[41px]" viewBox="0 0 41 44">
          <rect x="2.500" y="4" width="36" height="36" rx="8" fill="none" stroke="#aaa" strokeWidth="5" />
        </svg>
        <svg className="ml-[203px] h-[44px] w-[32px]" viewBox="0 0 32 44">
          <path d="M26 4L6 20q-2 2 0 4L26 40" fill="none" stroke="#aaa" strokeWidth="4.500" />
        </svg>
      </div>
    </footer>
  );
}

export default function App() {
  return (
    <div className="h-[2460px] w-[1080px] overflow-hidden bg-white font-[Roboto,'Noto_Sans_CJK_SC',sans-serif]">
      <Header />
      <Quote />
      <div className="h-[12px] bg-[#f4f4f4]" />
      <PeriodTabs />
      <Legend />
      <div className="relative">
        <PriceChart />
        <ChartControls />
      </div>
      <div className="relative">
        <VolumeChart />
        <VolumeLegend />
      </div>
      <div className="h-[12px] bg-[#f4f4f4]" />
      <InfoTabs />
      <Shortcuts />
      <BottomBar />
    </div>
  );
}
